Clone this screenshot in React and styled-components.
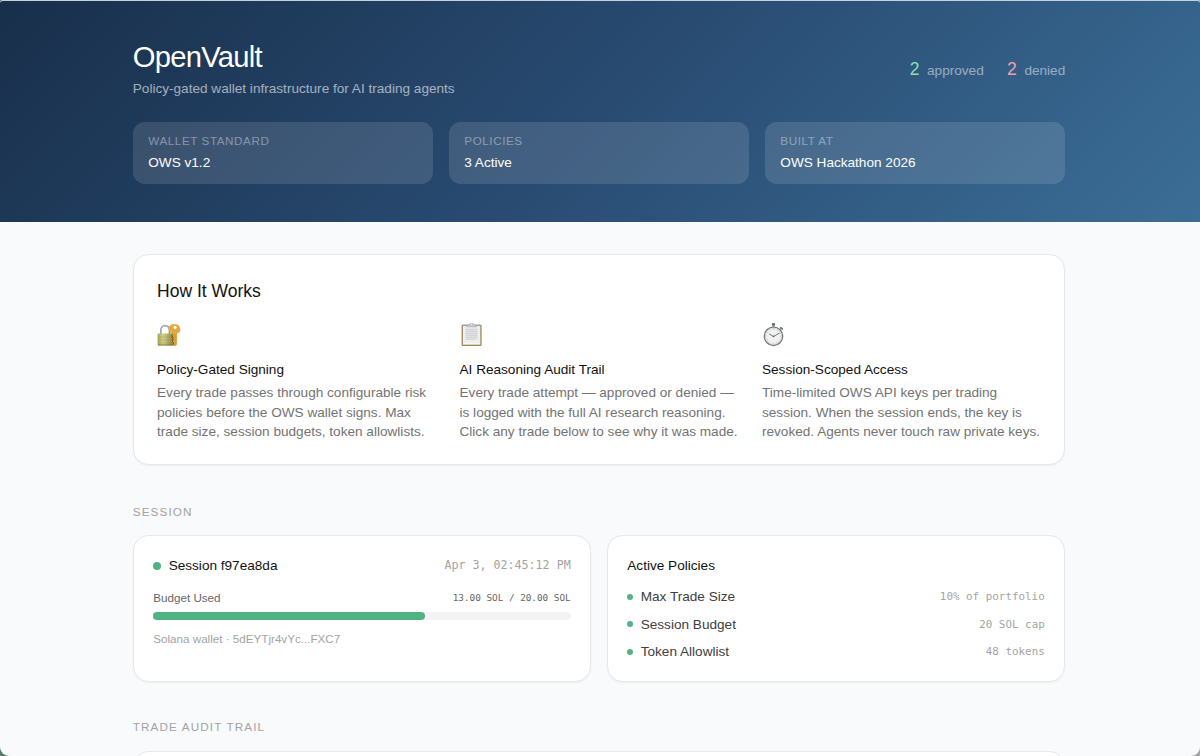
import React from "react";
import styled, { createGlobalStyle } from "styled-components";

const policies = [
  { name: "Max Trade Size", value: "10% of portfolio" },
  { name: "Session Budget", value: "20 SOL cap" },
  { name: "Token Allowlist", value: "48 tokens" },
];

const budget = { used: 13, total: 20 };

const LockIcon = () => (
  <svg width="24" height="24" viewBox="0 0 24 24">
    <defs>
      <linearGradient id="lockBody" x1="0" x2="1" y1="0" y2="0">
        <stop offset="0" stopColor="#a6a55c" />
        <stop offset="0.35" stopColor="#d3d08b" />
        <stop offset="1" stopColor="#93853b" />
      </linearGradient>
    </defs>
    <path d="M3.9 11V7.2a4.3 4.6 0 0 1 8.6 0V11" fill="none" stroke="#8b93a4" strokeWidth="1.7" />
    <path d="M4 10V7.2a4.2 4.5 0 0 1 8.2-1.2" fill="none" stroke="#c9cedb" strokeWidth="0.7" />
    <path
      fillRule="evenodd"
      d="M18.1 1.2a4.8 4.8 0 0 1 2 9.3v11.1l-1.4 1.3h-2.1l-1.6-1.6.9-1.4-1.1-1.4 1.1-1.7-1-1.5V10.6a4.8 4.8 0 0 1 3.2-9.4zM18.1 2.7a1.6 1.6 0 1 0 0 3.2 1.6 1.6 0 0 0 0-3.2z"
      fill="#e3aa42"
    />
    <path d="M18.2 11v11" stroke="#c98a2b" strokeWidth="0.7" />
    <rect x="0.6" y="10.4" width="15.6" height="12" rx="1.2" fill="url(#lockBody)" />
    <path d="M1 14h15M1 17h15M1 20h15" stroke="#8d8745" strokeWidth="0.5" opacity="0.6" />
    <path d="M1 22h15" stroke="#746b2d" strokeWidth="0.8" />
    <path d="M15 12.1v1.6l1.5.8-1.5 1.2 1.5 1.2-1.5 1.4 1.5 1.3v2.2" fill="none" stroke="#775c19" strokeWidth="1" />
  </svg>
);

const ClipboardIcon = () => (
  <svg width="24" height="24" viewBox="0 0 24 24">
    <rect x="1.6" y="1.8" width="20" height="21.2" rx="1.1" fill="#a3854f" />
    <rect x="2.9" y="2.6" width="17.4" height="18.8" fill="#eeeff1" />
    <rect x="5.6" y="5.4" width="12" height="11.6" fill="#dfe1e4" />
    <path d="M5.6 6.5h12M5.6 8.5h12M5.6 10.5h12M5.6 12.5h12M5.6 14.5h12M5.6 16.5h9" stroke="#d0d2d6" strokeWidth="0.8" />
    <path d="M2.9 21h17.4" stroke="#fff" strokeWidth="0.9" />
    <path d="M1.8 2.3h19.6" stroke="#9a9ba0" strokeWidth="1" />
    <path d="M6.6 3.8l1-1.9h2.2a1.9 1.9 0 0 1 3.8 0h2.2l1 1.9z" fill="#c3c7cd" stroke="#9a9fa8" strokeWidth="0.5" />
    <circle cx="11.7" cy="1.3" r="0.7" fill="#fff" />
  </svg>
);

const StopwatchIcon = () => (
  <svg width="24" height="24" viewBox="0 0 24 24">
    <rect x="9.9" y="0.1" width="3.2" height="2.8" rx="0.8" fill="#6d7278" />
    <path d="M11.5 2.5v2" stroke="#8a8f95" strokeWidth="2" />
    <path d="M18.2 6.5l1.3-1.3" stroke="#777c82" strokeWidth="1.2" />
    <path d="M18.7 4.5l1.7 1.6" stroke="#6d7278" strokeWidth="1.5" strokeLinecap="round" />
    <circle cx="11.5" cy="13.3" r="9.2" fill="#f1f1ef" stroke="#777b80" strokeWidth="1.4" />
    <circle cx="11.5" cy="13.3" r="8.1" fill="none" stroke="#cccfd1" strokeWidth="0.8" />
    <circle cx="11.5" cy="13.3" r="6.9" fill="none" stroke="#a5a8ab" strokeWidth="1" strokeDasharray="0.6 3.01" />
    <path d="M7 10.8l4.5 2.7 6-3.5" fill="none" stroke="#55595d" strokeWidth="0.8" />
    <circle cx="11.5" cy="13.4" r="0.8" fill="#55595d" />
  </svg>
);

const steps = [
  {
    icon: <LockIcon />,
    title: "Policy-Gated Signing",
    lines: [
      "Every trade passes through configurable risk",
      "policies before the OWS wallet signs. Max",
      "trade size, session budgets, token allowlists.",
    ],
  },
  {
    icon: <ClipboardIcon />,
    title: "AI Reasoning Audit Trail",
    lines: [
      "Every trade attempt — approved or denied —",
      "is logged with the full AI research reasoning.",
      "Click any trade below to see why it was made.",
    ],
  },
  {
    icon: <StopwatchIcon />,
    title: "Session-Scoped Access",
    lines: [
      "Time-limited OWS API keys per trading",
      "session. When the session ends, the key is",
      "revoked. Agents never touch raw private keys.",
    ],
  },
];

function App() {
  return (
    <Window>
      <GlobalStyle />
      <Header>
        <Container>
          <HeaderTop>
            <div>
              <Title>OpenVault</Title>
              <Subtitle>Policy-gated wallet infrastructure for AI trading agents</Subtitle>
            </div>
            <Stats>
              <Stat color="#86e0b4"><b>2</b> approved</Stat>
              <Stat color="#f0a0a8"><b>2</b> denied</Stat>
            </Stats>
          </HeaderTop>
          <InfoGrid>
            <InfoCard>
              <InfoLabel>WALLET STANDARD</InfoLabel>
              <InfoValue>OWS v1.2</InfoValue>
            </InfoCard>
            <InfoCard>
              <InfoLabel>POLICIES</InfoLabel>
              <InfoValue>3 Active</InfoValue>
            </InfoCard>
            <InfoCard>
              <InfoLabel>BUILT AT</InfoLabel>
              <InfoValue>OWS Hackathon 2026</InfoValue>
            </InfoCard>
          </InfoGrid>
        </Container>
      </Header>

      <Main>
        <HowCard>
          <HowTitle>How It Works</HowTitle>
          <StepGrid>
            {steps.map((step) => (
              <Step key={step.title}>
                {step.icon}
                <StepTitle>{step.title}</StepTitle>
                <StepText>
                  {step.lines.map((line) => (
                    <span key={line}>{line} </span>
                  ))}
                </StepText>
              </Step>
            ))}
          </StepGrid>
        </HowCard>

        <SectionTitle>SESSION</SectionTitle>
        <SessionGrid>
          <Card>
            <Row>
              <RowName>
                <Dot size={8} />
                <CardTitle>Session f97ea8da</CardTitle>
              </RowName>
              <Mono size="11.67px">Apr 3, 02:45:12 PM</Mono>
            </Row>
            <BudgetRow>
              <span>Budget Used</span>
              <Mono size="9.33px" color="#666">
                {budget.used.toFixed(2)} SOL / {budget.total.toFixed(2)} SOL
              </Mono>
            </BudgetRow>
            <Bar>
              <BarFill style={{ width: `${(budget.used / budget.total) * 100}%` }} />
            </Bar>
            <Wallet>Solana wallet · 5dEYTjr4vYc...FXC7</Wallet>
          </Card>
          <Card>
            <CardTitle>Active Policies</CardTitle>
            <PolicyList>
              {policies.map((policy) => (
                <Row key={policy.name}>
                  <PolicyName>
                    <Dot size={6} />
                    {policy.name}
                  </PolicyName>
                  <Mono size="10.9px">{policy.value}</Mono>
                </Row>
              ))}
            </PolicyList>
          </Card>
        </SessionGrid>

        <SectionTitle>TRADE AUDIT TRAIL</SectionTitle>
        <TradeCard />
      </Main>
    </Window>
  );
}

const GlobalStyle = createGlobalStyle`
  * {
    box-sizing: border-box;
  }
  body {
    margin: 0;
    overflow: hidden;
    background: linear-gradient(90deg, #56786a 50%, #a5a5a5 50%);
    font-family: "Liberation Sans", Arial, sans-serif;
    font-size: 13.6px;
    line-height: 19.5px;
    color: #111;
  }
  h1, h2, h3, p {
    margin: 0;
    font-weight: 400;
  }
`;
const Window = styled.div`
  height: 756px;
  overflow: hidden;
  background: #f9fafc;
  border-top: 1px solid #c3d2dc;
  border-radius: 3px 3px 9px 9px;
`;
const Header = styled.header`
  height: 221px;
  padding-top: 39.4px;
  background: linear-gradient(135deg, #182f4a 0%, #294b72 50%, #3b6e96 100%);
  color: #fff;
`;
const Container = styled.div`
  width: 932.5px;
  margin: 0 auto;
  transform: translateX(-1px);
`;
const HeaderTop = styled.div`
  display: flex;
  justify-content: space-between;
  align-items: center;
`;
const Title = styled.h1`
  font-size: 29.2px;
  line-height: 35px;
  letter-spacing: -0.025em;
`;
const Subtitle = styled.p`
  margin-top: 4px;
  color: rgba(255, 255, 255, 0.6);
`;
const Stats = styled.div`
  display: flex;
  gap: 23.3px;
`;
const Stat = styled.span`
  line-height: 27px;
  color: rgba(255, 255, 255, 0.5);

  b {
    margin-right: 3.9px;
    font-size: 17.5px;
    font-weight: 400;
    color: ${(props) => props.color};
  }
`;
const InfoGrid = styled.div`
  display: grid;
  grid-template-columns: repeat(3, 1fr);
  gap: 15.6px;
  margin-top: 22.9px;
`;
const InfoCard = styled.div`
  height: 62px;
  padding: 11px 15.5px;
  border-radius: 11.7px;
  background: rgba(255, 255, 255, 0.12);
`;
const InfoLabel = styled.div`
  font-size: 11.7px;
  line-height: 15.5px;
  letter-spacing: 0.56px;
  color: rgba(255, 255, 255, 0.4);
`;
const InfoValue = styled.div`
  margin-top: 5px;
`;
const Main = styled.main`
  width: 932.5px;
  margin: 0 auto;
  padding-top: 31.6px;
  transform: translateX(-1px);
`;
const Card = styled.section`
  padding: 19.5px;
  background: #fff;
  border: 1px solid #e6e8ec;
  border-radius: 15.6px;
  box-shadow: 0 1px 2px rgba(0, 0, 0, 0.05);
`;
const HowCard = styled(Card)`
  height: 211.5px;
  padding: 23.3px;
`;
const HowTitle = styled.h2`
  font-size: 17.5px;
  line-height: 27px;
`;
const StepGrid = styled.div`
  display: grid;
  grid-template-columns: repeat(3, 1fr);
  gap: 23.5px;
  margin-top: 18.2px;
`;
const Step = styled.div`
  svg {
    display: block;
  }
`;
const StepTitle = styled.h3`
  margin-top: 12.8px;
  font-size: 13.6px;
`;
const StepText = styled.p`
  margin-top: 3.9px;
  color: #737373;
  white-space: nowrap;

  span {
    display: block;
  }
`;
const SectionTitle = styled.h2`
  margin-top: 38.5px;
  font-size: 11.7px;
  line-height: 16px;
  letter-spacing: 1.13px;
  color: #a3a3a3;
`;
const SessionGrid = styled.div`
  display: grid;
  grid-template-columns: 1fr 1fr;
  gap: 15.6px;
  height: 145.4px;
  margin-top: 15.8px;
`;
const Row = styled.div`
  display: flex;
  justify-content: space-between;
  align-items: center;
`;
const RowName = styled.div`
  display: flex;
  align-items: center;
  gap: 7.4px;
`;
const PolicyName = styled(RowName)`
  color: #404040;
`;
const CardTitle = styled.h3`
  font-size: 13.6px;
`;
const Dot = styled.span`
  width: ${(props) => props.size}px;
  height: ${(props) => props.size}px;
  border-radius: 50%;
  background: #52b382;
`;
const Mono = styled.span`
  font-family: "DejaVu Sans Mono", monospace;
  font-size: ${(props) => props.size};
  color: ${(props) => props.color || "#a3a3a3"};
`;
const BudgetRow = styled(Row)`
  margin-top: 15px;
  font-size: 11.65px;
  line-height: 16px;
  color: #666;
`;
const Bar = styled.div`
  height: 8px;
  margin-top: 5.5px;
  border-radius: 4px;
  background: #f3f3f4;
`;
const BarFill = styled.div`
  height: 100%;
  border-radius: 4px;
  background: #52b382;
`;
const Wallet = styled.p`
  margin-top: 11px;
  font-size: 11.65px;
  line-height: 16px;
  color: #a3a3a3;
`;
const PolicyList = styled.div`
  display: flex;
  flex-direction: column;
  gap: 7.7px;
  margin-top: 12px;
`;
const TradeCard = styled(Card)`
  height: 60px;
  margin-top: 15.6px;
`;

export default App;
